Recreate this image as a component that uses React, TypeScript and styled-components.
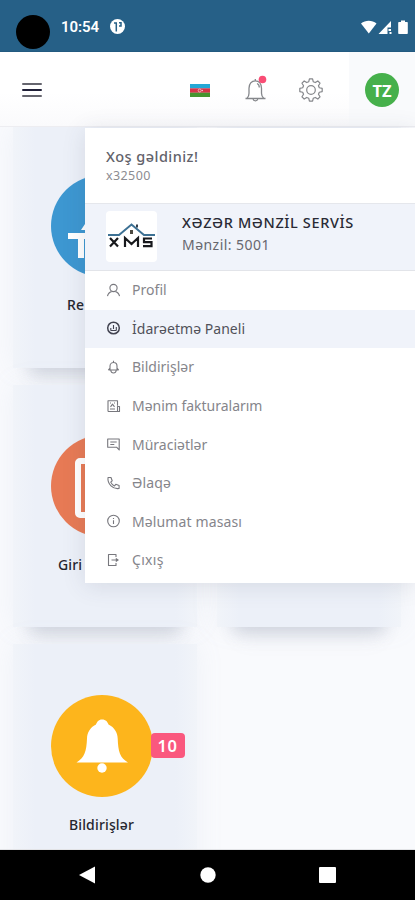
import React from "react";
import styled, { createGlobalStyle } from "styled-components";

const Global = createGlobalStyle`
  * { box-sizing: border-box; }
  body { margin: 0; font-family: "Noto Sans", "Open Sans", sans-serif; background: #f9fafd; }
`;

const Screen = styled.div`
  position: relative;
  width: 415px;
  height: 900px;
  display: flex;
  flex-direction: column;
  overflow: hidden;
`;

const StatusBar = styled.div`
  height: 52px;
  flex: none;
  background: #266087;
  border-bottom: 1px solid #235a80;
  display: flex;
  align-items: center;
  padding: 1px 7px 0 16px;
  color: #fff;
`;
const Camera = styled.div`
  width: 34px;
  height: 34px;
  border-radius: 50%;
  background: #000;
  margin: 11px 11px 0 0;
`;
const Clock = styled.span`
  font: 600 15px Roboto, sans-serif;
  letter-spacing: -0.1px;
  margin: 2px 11px 0 0;
`;
const StatusIcons = styled.div`
  margin: 2px 0 0 auto;
  display: flex;
  align-items: center;
`;

const Header = styled.header`
  height: 75px;
  flex: none;
  display: flex;
  align-items: center;
  background: linear-gradient(#fff 55%, #fafafc);
  border-bottom: 1px solid #ededf1;
  padding: 2px 0 0 22px;
  position: relative;
  z-index: 2;
`;
const Burger = styled.div`
  width: 20px;
  height: 14px;
  display: flex;
  flex-direction: column;
  justify-content: space-between;
  margin-right: 148px;
  span { height: 2px; background: #65656e; border-radius: 1px; }
  span:nth-child(2) { background: #202038; }
`;
const BellIcon = styled.div`
  width: 24px;
  height: 28px;
  margin: -2px 0 0 34px;
`;
const GearIcon = styled.div`
  width: 24px;
  height: 24px;
  margin-left: 31px;
`;
const AvatarCell = styled.div`
  margin: -2px 0 0 auto;
  width: 66px;
  align-self: stretch;
  background: #f9fafc;
  display: flex;
  justify-content: center;
  padding-top: 21px;
`;
const Avatar = styled.div`
  width: 34px;
  height: 34px;
  border-radius: 50%;
  background: #46b04b;
  color: #fff;
  font-weight: 700;
  font-size: 16.5px;
  line-height: 36px;
  text-align: center;
`;

const Board = styled.main`
  flex: 1;
  min-height: 0;
  overflow: hidden;
  display: grid;
  grid-template-columns: 184px 184px;
  grid-template-rows: 241px 242px 242px;
  gap: 17px 20px;
  padding-left: 13px;
  border-bottom: 1px solid #e2e3e6;
`;
const Card = styled.section<{ $lead: number }>`
  background: linear-gradient(90deg, #f1f4f9, #ecf0f8 12%, #ecf0f8 88%, #f1f4f9);
  box-shadow: 0 22px 14px -16px rgba(130, 142, 165, 0.22), 0 32px 20px -22px rgba(130, 140, 160, 0.12),
    0 0 26px rgba(150, 165, 195, 0.1);
  display: flex;
  flex-direction: column;
  align-items: center;
  padding: ${(p) => p.$lead}px 7px 0 0;
`;
const Disc = styled.div<{ $tone: string }>`
  width: 102px;
  height: 102px;
  flex: none;
  border-radius: 50%;
  background: ${(p) => p.$tone};
  position: relative;
`;
const Badge = styled.span`
  position: absolute;
  left: 100px;
  top: 38px;
  width: 34px;
  height: 25px;
  border-radius: 4px;
  background: #fa587e;
  color: #fff;
  font-weight: 600;
  font-size: 16.5px;
  line-height: 25px;
  letter-spacing: 0.5px;
  text-align: center;
`;
const CardTitle = styled.div<{ $indent?: number }>`
  margin-top: 18px;
  ${(p) => (p.$indent ? `align-self: flex-start; margin-left: ${p.$indent}px;` : "")}
  color: #25262f;
  font-weight: 500;
  font-size: 14px;
  line-height: 20px;
  letter-spacing: 0.15px;
  white-space: nowrap;
`;

const Menu = styled.nav`
  position: absolute;
  top: 128px;
  left: 85px;
  right: 0;
  height: 455px;
  background: #fff;
  box-shadow: 0 3px 22px rgba(60, 70, 95, 0.13);
  z-index: 3;
`;
const Welcome = styled.div`
  height: 76px;
  padding: 18px 21px 0;
  border-bottom: 1px solid #e5e7ec;
`;
const Greeting = styled.div`
  font-size: 14.5px;
  font-weight: 500;
  line-height: 20px;
  letter-spacing: 0.45px;
  color: #62626a;
`;
const Login = styled.div`
  font-size: 12.5px;
  line-height: 18px;
  letter-spacing: 0.4px;
  color: #8c8c91;
  margin-top: 1px;
`;
const Company = styled.div`
  height: 67px;
  padding: 7px 21px;
  display: flex;
  gap: 25px;
  background: #f0f3fa;
  border-bottom: 1px solid #e2e4e9;
`;
const Logo = styled.div`
  width: 51px;
  height: 51px;
  border-radius: 4px;
  background: #fff;
`;
const CompanyName = styled.div`
  font-size: 14.5px;
  font-weight: 500;
  line-height: 22px;
  letter-spacing: 0.62px;
  color: #292a35;
  white-space: nowrap;
`;
const Flat = styled.div`
  font-size: 14px;
  line-height: 22px;
  letter-spacing: 0.45px;
  margin-top: 1px;
  color: #67676e;
`;
const Item = styled.div<{ $active?: boolean; $track?: number }>`
  height: 38.6px;
  display: flex;
  align-items: center;
  gap: 11px;
  padding: 0 0 1px 21px;
  font-size: 14px;
  letter-spacing: ${(p) => p.$track ?? 0}px;
  color: ${(p) => (p.$active ? "#505159" : "#85858b")};
  background: ${(p) => (p.$active ? "#f0f3fa" : "transparent")};
  svg { flex: none; color: ${(p) => (p.$active ? "#424350" : "#77777d")}; }
`;

const NavBar = styled.footer`
  height: 50px;
  flex: none;
  background: #000;
  display: flex;
  align-items: center;
  padding-left: 79px;
  gap: 103.500px;
`;

const glyphs: Record<string, React.ReactNode> = {
  user: <><circle cx="7" cy="5" r="3.6" /><path d="M1 13.2c.5-2.5 2-4.1 4-4.6M13 13.2c-.5-2.5-2-4.1-4-4.6" /></>,
  gauge: <><circle cx="7" cy="7" r="5.8" strokeWidth="1.5" /><path d="M4 9.5h6M7 8V4M4.3 7v2.3M9.8 6v3.3" /></>,
  bell: <path d="M1.800 10h10.400M3.500 10V6a3.500 3.500 0 0 1 7 0v4M7 2.300V.8M4.300 10.500q.3 2.500 2.700 2.500t2.700-2.500M1.800 10l1.700-2M12.200 10l-1.700-2" />,
  invoice: <path d="M1.500 12.500V1.700h9.500v5M1.500 12.500h11.500V7.500H11v4.800M3.500 10h5M4 7.800l2-2.600 2 2.600M3.500 4h1M7.500 4h1" />,
  chat: <path d="M1.200 2h11.500v11l-2.400-2.700H1.200zM3.800 5h6.400M3.800 7.500h4" />,
  phone: <path d="M1.500 1.500h3l1.200 3.300-1.500 1.300c.8 1.800 2 3 3.800 3.800l1.300-1.600 3.300 1.200v3C6.500 13.500.8 8 1.500 1.500z" />,
  info: <><circle cx="7" cy="7" r="5.8" /><path d="M7 6.300v3.600M7 4v1" /></>,
  exit: <><path d="M9.500 4V1.500H2v11h7.500V10M5 7h5" /><path d="M9.300 4.800 12.500 7 9.300 9.200z" fill="currentColor" stroke="none" /></>,
};
const Glyph = ({ name }: { name: string }) => (
  <svg width="15" height="14" viewBox="0 0 14 14" fill="none" stroke="currentColor" strokeWidth="1.1" strokeLinejoin="round">
    {glyphs[name]}
  </svg>
);

const items = [
  { icon: "user", label: "Profil", track: 0.05 },
  { icon: "gauge", label: "İdarəetmə Paneli", track: 0.03, active: true },
  { icon: "bell", label: "Bildirişlər", track: 0 },
  { icon: "invoice", label: "Mənim fakturalarım", track: -0.02 },
  { icon: "chat", label: "Müraciətlər", track: 0 },
  { icon: "phone", label: "Əlaqə", track: 0.15 },
  { icon: "info", label: "Məlumat masası", track: 0.12 },
  { icon: "exit", label: "Çıxış", track: 0.3 },
];

const gearPath = (() => {
  const pts: string[] = [];
  for (let i = 0; i < 8; i++) {
    [[-15, 8.6], [-8, 11.3], [8, 11.3], [15, 8.6]].forEach(([d, r]) => {
      const a = ((i * 45 + d) * Math.PI) / 180;
      pts.push(`${(12 + r * Math.cos(a)).toFixed(2)} ${(12 + r * Math.sin(a)).toFixed(2)}`);
    });
  }
  return `M${pts.join("L")}Z`;
})();

export default function App() {
  return (
    <Screen>
      <Global />
      <StatusBar>
        <Camera />
        <Clock>10:54</Clock>
        <svg width="15" height="15" viewBox="0 0 15 15">
          <circle cx="7.5" cy="7.5" r="7.5" fill="#fff" />
          <path d="M6.300 12.500V4.500M4 4h3M9 3.800h2V7H9" fill="none" stroke="#266087" strokeWidth="1.500" />
        </svg>
        <StatusIcons>
          <svg width="47" height="15" viewBox="0 0 47 15" fill="#fff">
            <path d="M0 3.500C4.500-.3 11-.3 15.500 3.500L7.800 13.500Z" />
            <path d="M17.500 14 30 1v6.500h-3.500V14Z" />
            <path d="M27.500 9h2.500v2h-2.500zM28.500 12h2v2h-2z" />
            <path d="M40 .5h4V2h2q.8 0 .8.8v10.500q0 .8-.8.8h-8q-.8 0-.8-.8V2.800q0-.8.8-.8h2z" />
          </svg>
        </StatusIcons>
      </StatusBar>
      <Header>
        <Burger><span /><span /><span /></Burger>
        <svg width="20" height="13" viewBox="0 0 20 13">
          <path fill="#24a8d5" d="M0 0h20v4.400H0z" />
          <path fill="#d63449" d="M0 4.300h20v4.500H0z" />
          <path fill="#45952f" d="M0 8.700h20V13H0z" />
          <circle cx="9.700" cy="6.500" r="1.500" fill="none" stroke="#f4c5cc" strokeWidth=".8" />
          <circle cx="12.300" cy="6.500" r=".8" fill="#f4c5cc" />
        </svg>
        <BellIcon>
          <svg width="24" height="28" viewBox="0 0 24 28" fill="none" stroke="#85878b" strokeWidth="1.300">
            <path d="M1.500 23.500h20M3 23.300c1.700-1.500 2-3 2-5v-5c0-4.500 2.500-7.500 6.300-7.500s6.200 3 6.200 7.500v5c0 2 .5 3.500 2.200 5M9 24c.5 2.600 4.300 2.600 4.800 0M11.300 5.500V4M13 8.500c1.500.5 2.300 2 2.300 4" />
            <circle cx="18.500" cy="4.500" r="3.800" fill="#f94d75" stroke="none" />
          </svg>
        </BellIcon>
        <GearIcon>
          <svg width="24" height="24" viewBox="0 0 24 24" fill="none" stroke="#85878b" strokeWidth="1.200" strokeLinejoin="round">
            <path d={gearPath} />
            <circle cx="12" cy="12" r="4.300" />
          </svg>
        </GearIcon>
        <AvatarCell><Avatar>TZ</Avatar></AvatarCell>
      </Header>
      <Board>
        <Card $lead={48}>
          <Disc $tone="#3d97d1">
            <svg width="102" height="102" viewBox="0 0 102 102" fill="#fff">
              <path d="M17 58h68v6H75v19h-6V64H33v19h-6V64H17zM30 55l4-6h34l4 6z" />
            </svg>
          </Disc>
          <CardTitle $indent={54}>Re</CardTitle>
        </Card>
        <Card $lead={0} />
        <Card $lead={50}>
          <Disc $tone="#e77a55">
            <svg width="102" height="102" viewBox="0 0 102 102" fill="none" stroke="#fff" strokeWidth="6">
              <rect x="27" y="26" width="48" height="54" rx="2" />
            </svg>
          </Disc>
          <CardTitle $indent={45}>Giri</CardTitle>
        </Card>
        <Card $lead={0} />
        <Card $lead={51}>
          <Disc $tone="#fdb51c">
            <svg width="102" height="102" viewBox="0 0 102 102" fill="#fff">
              <path d="M51 24.500c4 0 5.500 2.500 6.500 5 6 3 9 8 9.200 14 .5 13 2 19 10.300 24H25.500C33.500 62.500 35.500 56.500 36 43.500c.2-6 3-11 9-14 1-2.500 2.500-5 6-5z" />
              <circle cx="51" cy="73" r="4.700" />
            </svg>
            <Badge>10</Badge>
          </Disc>
          <CardTitle>Bildirişlər</CardTitle>
        </Card>
      </Board>
      <Menu>
        <Welcome>
          <Greeting>Xoş gəldiniz!</Greeting>
          <Login>x32500</Login>
        </Welcome>
        <Company>
          <Logo>
            <svg width="51" height="51" viewBox="0 0 51 51" fill="none">
              <path d="M2 24h11L25.500 13.500 38 24h11" stroke="#3d7194" strokeWidth="2" />
              <path d="M31 16.500v-3" stroke="#333f4c" strokeWidth="2" />
              <path d="M24 19h3v4h-3z" fill="#4d4a42" />
              <path d="m4 27 8 8.500M12 27l-8 8.500M19 36v-9l6.500 6 6.500-6v9M46 27.500h-8v3.700h7.500v4H37" stroke="#18191d" strokeWidth="2.200" />
            </svg>
          </Logo>
          <div>
            <CompanyName>XƏZƏR MƏNZİL SERVİS</CompanyName>
            <Flat>Mənzil: 5001</Flat>
          </div>
        </Company>
        {items.map((it) => (
          <Item key={it.icon} $active={it.active} $track={it.track}>
            <Glyph name={it.icon} />
            {it.label}
          </Item>
        ))}
      </Menu>
      <NavBar>
        <svg width="17" height="18" viewBox="0 0 17 18"><path d="M0 9 16 .5v17z" fill="#fff" /></svg>
        <svg width="16" height="16" viewBox="0 0 16 16"><circle cx="8" cy="8" r="7.700" fill="#fff" /></svg>
        <svg width="17" height="16" viewBox="0 0 17 16"><rect width="17" height="16" rx="1" fill="#fff" /></svg>
      </NavBar>
    </Screen>
  );
}
